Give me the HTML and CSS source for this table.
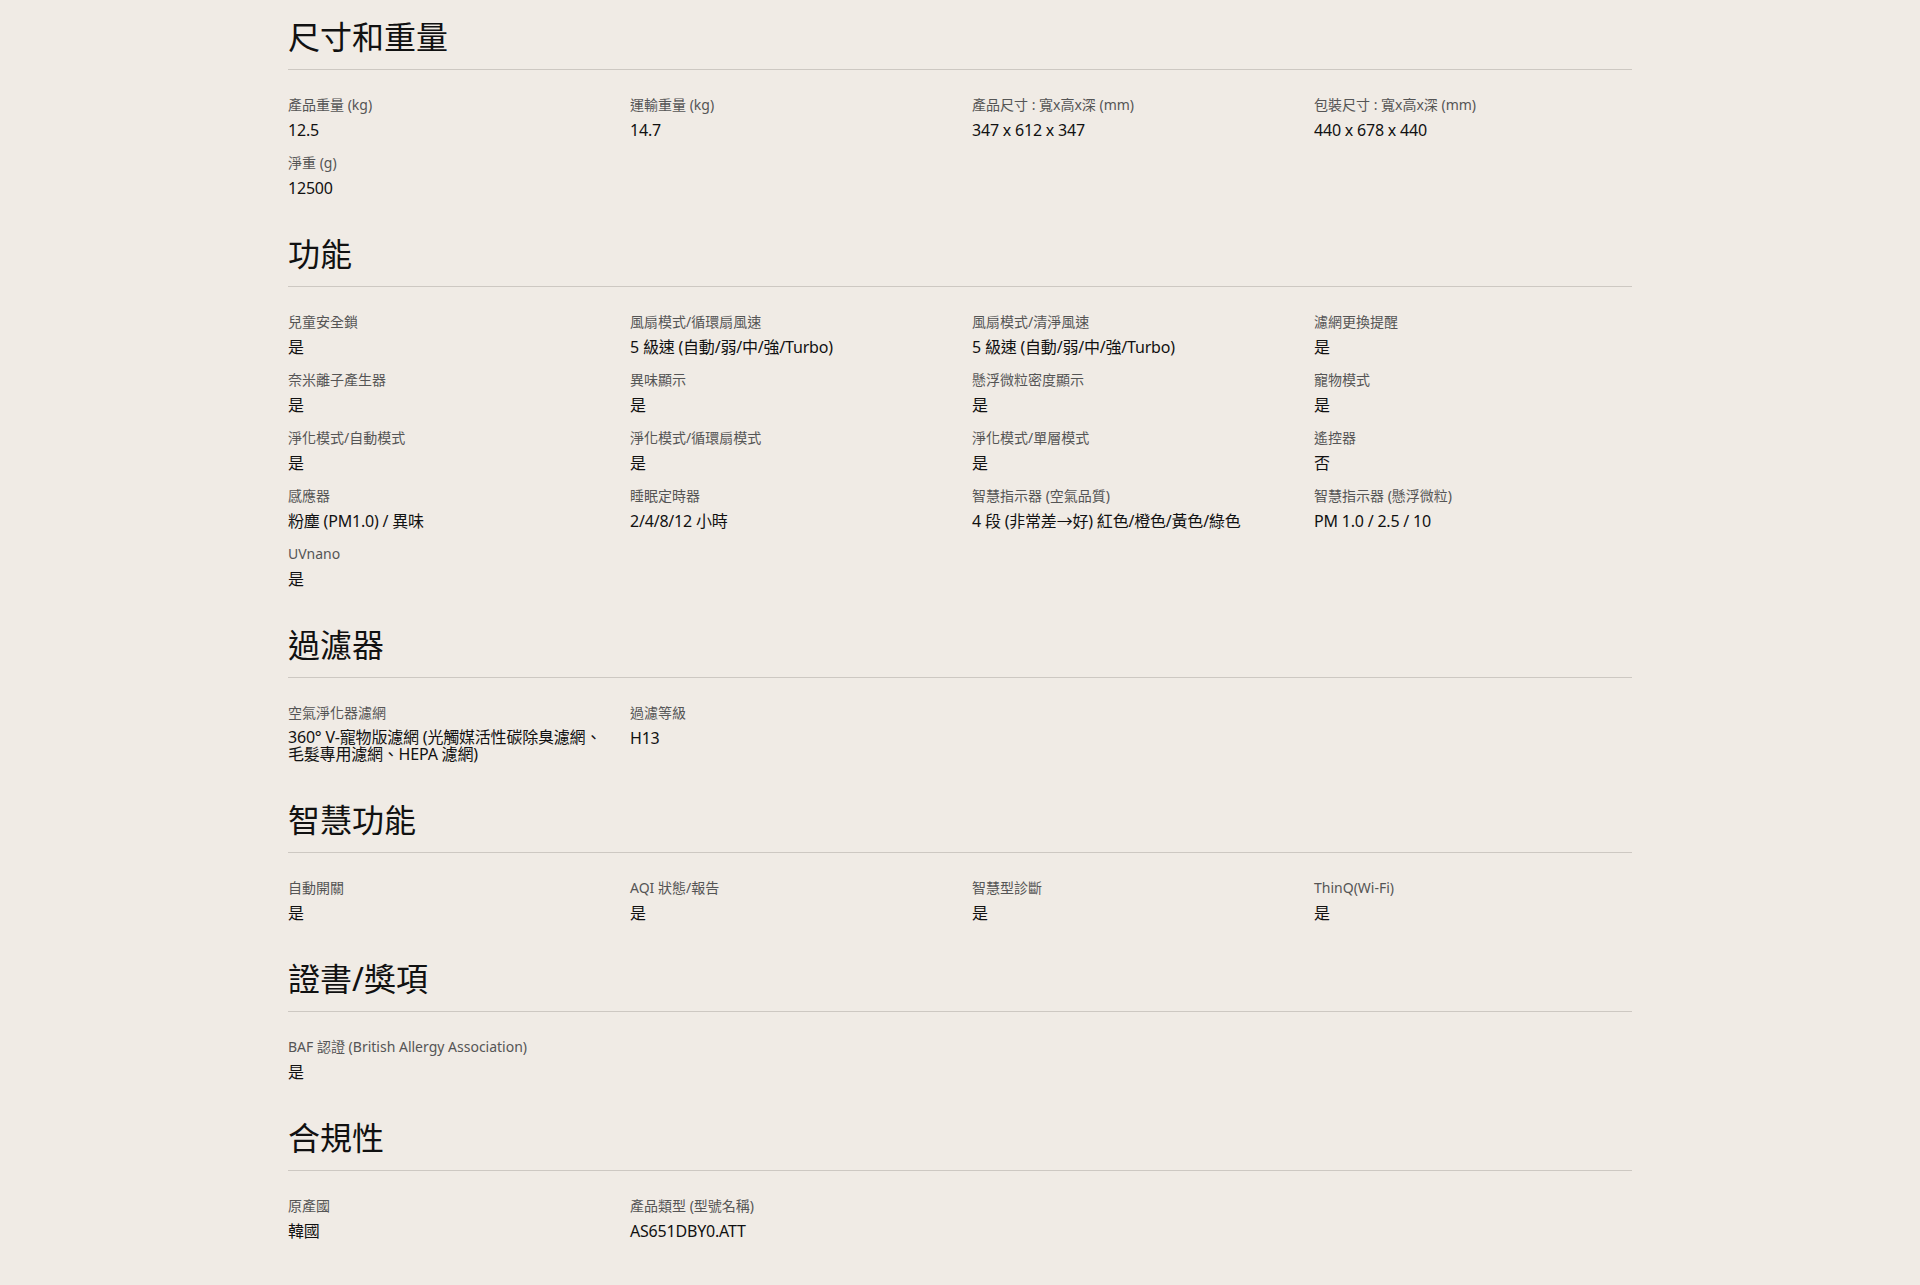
FILE: index.html
```html
<!DOCTYPE html>
<html lang="zh-Hant">
<head>
<meta charset="utf-8">
<title>規格</title>
<link rel="stylesheet" href="styles.css">
</head>
<body>
<main class="specs">
  <section class="spec-section">
    <h2 class="spec-title">尺寸和重量</h2>
    <dl class="spec-grid">
      <div class="spec-item"><dt>產品重量 (kg)</dt><dd>12.5</dd></div>
      <div class="spec-item"><dt>運輸重量 (kg)</dt><dd>14.7</dd></div>
      <div class="spec-item"><dt>產品尺寸 : 寬x高x深 (mm)</dt><dd>347 x 612 x 347</dd></div>
      <div class="spec-item"><dt>包裝尺寸 : 寬x高x深 (mm)</dt><dd>440 x 678 x 440</dd></div>
      <div class="spec-item"><dt>淨重 (g)</dt><dd>12500</dd></div>
    </dl>
  </section>

  <section class="spec-section">
    <h2 class="spec-title">功能</h2>
    <dl class="spec-grid">
      <div class="spec-item"><dt>兒童安全鎖</dt><dd>是</dd></div>
      <div class="spec-item"><dt>風扇模式/循環扇風速</dt><dd>5 級速 (自動/弱/中/強/Turbo)</dd></div>
      <div class="spec-item"><dt>風扇模式/清淨風速</dt><dd>5 級速 (自動/弱/中/強/Turbo)</dd></div>
      <div class="spec-item"><dt>濾網更換提醒</dt><dd>是</dd></div>
      <div class="spec-item"><dt>奈米離子產生器</dt><dd>是</dd></div>
      <div class="spec-item"><dt>異味顯示</dt><dd>是</dd></div>
      <div class="spec-item"><dt>懸浮微粒密度顯示</dt><dd>是</dd></div>
      <div class="spec-item"><dt>寵物模式</dt><dd>是</dd></div>
      <div class="spec-item"><dt>淨化模式/自動模式</dt><dd>是</dd></div>
      <div class="spec-item"><dt>淨化模式/循環扇模式</dt><dd>是</dd></div>
      <div class="spec-item"><dt>淨化模式/單層模式</dt><dd>是</dd></div>
      <div class="spec-item"><dt>遙控器</dt><dd>否</dd></div>
      <div class="spec-item"><dt>感應器</dt><dd>粉塵 (PM1.0) / 異味</dd></div>
      <div class="spec-item"><dt>睡眠定時器</dt><dd>2/4/8/12 小時</dd></div>
      <div class="spec-item"><dt>智慧指示器 (空氣品質)</dt><dd>4 段 (非常差→好) 紅色/橙色/黃色/綠色</dd></div>
      <div class="spec-item"><dt>智慧指示器 (懸浮微粒)</dt><dd>PM 1.0 / 2.5 / 10</dd></div>
      <div class="spec-item"><dt>UVnano</dt><dd>是</dd></div>
    </dl>
  </section>

  <section class="spec-section">
    <h2 class="spec-title">過濾器</h2>
    <dl class="spec-grid">
      <div class="spec-item"><dt>空氣淨化器濾網</dt><dd class="multi">360° V-寵物版濾網 (光觸媒活性碳除臭濾網、<br>毛髮專用濾網、HEPA 濾網)</dd></div>
      <div class="spec-item"><dt>過濾等級</dt><dd>H13</dd></div>
    </dl>
  </section>

  <section class="spec-section">
    <h2 class="spec-title">智慧功能</h2>
    <dl class="spec-grid">
      <div class="spec-item"><dt>自動開關</dt><dd>是</dd></div>
      <div class="spec-item"><dt>AQI 狀態/報告</dt><dd>是</dd></div>
      <div class="spec-item"><dt>智慧型診斷</dt><dd>是</dd></div>
      <div class="spec-item"><dt>ThinQ(Wi-Fi)</dt><dd>是</dd></div>
    </dl>
  </section>

  <section class="spec-section">
    <h2 class="spec-title">證書/獎項</h2>
    <dl class="spec-grid">
      <div class="spec-item"><dt>BAF 認證 (British Allergy Association)</dt><dd>是</dd></div>
    </dl>
  </section>

  <section class="spec-section">
    <h2 class="spec-title">合規性</h2>
    <dl class="spec-grid">
      <div class="spec-item"><dt>原產國</dt><dd>韓國</dd></div>
      <div class="spec-item"><dt>產品類型 (型號名稱)</dt><dd>AS651DBY0.ATT</dd></div>
    </dl>
  </section>
</main>
</body>
</html>
```

FILE: styles.css
```css
* {
  box-sizing: border-box;
}

html, body {
  margin: 0;
  padding: 0;
  background: #f0ebe5;
}

body {
  font-family: "Noto Sans", "Noto Sans CJK TC", sans-serif;
  color: #111;
}

.specs {
  width: 1344px;
  margin: 0 0 0 288px;
  padding-top: 17px;
}

.spec-title {
  margin: 0;
  font-size: 32px;
  line-height: 40px;
  font-weight: 400;
  color: #111;
  padding-bottom: 12px;
  border-bottom: 1px solid #cdc8c2;
}

.spec-grid {
  margin: 0;
  padding: 25px 0 37px;
  display: grid;
  grid-template-columns: repeat(4, 1fr);
  column-gap: 24px;
  row-gap: 14px;
}

.spec-item dt {
  font-size: 14px;
  line-height: 20px;
  color: #555;
  margin: 0 0 6px;
}

.spec-item dd {
  margin: 0;
  font-size: 16px;
  line-height: 18px;
  color: #111;
  letter-spacing: -0.2px;
}

.spec-item dd.multi {
  line-height: 17px;
}
```
